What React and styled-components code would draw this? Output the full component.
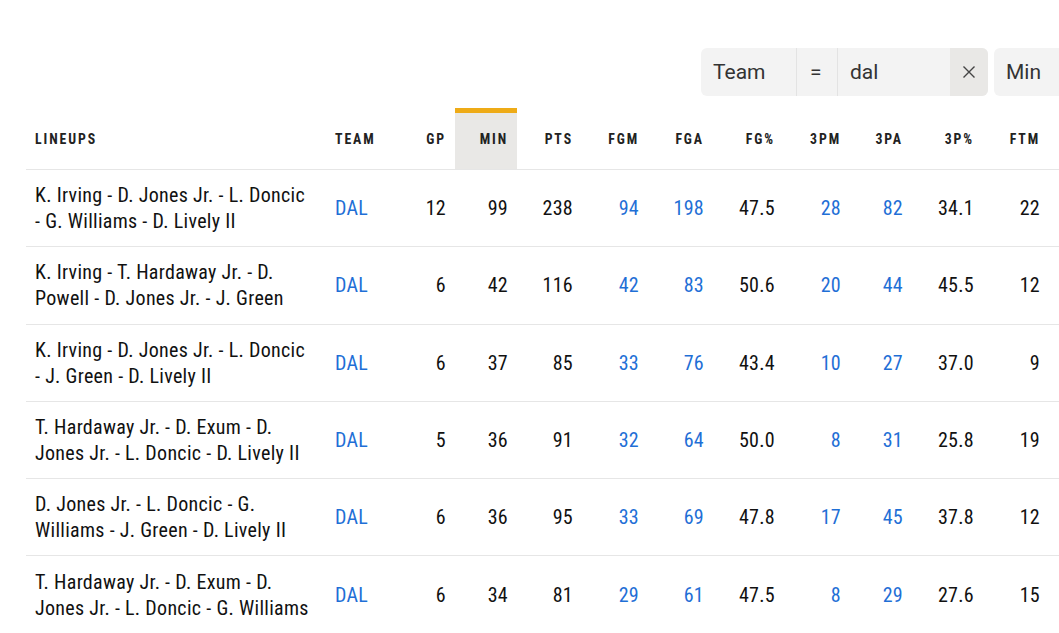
import React from "react";
import styled, { createGlobalStyle } from "styled-components";

const GlobalStyle = createGlobalStyle`
  html, body {
    margin: 0;
    padding: 0;
    overflow: hidden;
    background: #fff;
  }
  body {
    font-family: "Roboto Condensed", Roboto, "Liberation Sans", sans-serif;
    color: #111;
  }
`;

const Page = styled.div`
  width: 1255px;
  padding: 48px 0 0 26px;
`;

const FilterBar = styled.div`
  display: flex;
  justify-content: flex-end;
  gap: 6px;
  height: 48px;
  margin-bottom: 12px;
`;

const Filter = styled.div`
  display: flex;
  background: #f3f3f3;
  border-radius: 6px;
  overflow: hidden;
  font-family: Roboto, "Liberation Sans", sans-serif;
  font-size: 21px;
  color: #333;
`;

const FilterPart = styled.div`
  display: flex;
  align-items: center;
  width: ${(p) => p.$w}px;
  padding-left: ${(p) => p.$pl || 12}px;
  box-sizing: border-box;
  border-right: 1px solid ${(p) => (p.$last ? "transparent" : "#e3e3e3")};
`;

const ClearButton = styled.button`
  width: 38px;
  border: 0;
  background: #e9e8e6;
  color: #444;
  display: flex;
  align-items: center;
  justify-content: center;
  padding: 0;
  cursor: pointer;
`;

const Table = styled.table`
  border-collapse: collapse;
  table-layout: fixed;
  width: 1255px;
`;

const HeadCell = styled.th`
  height: 51px;
  padding: 0 9px 5px;
  font-size: 13.8px;
  font-weight: 700;
  letter-spacing: 1.9px;
  text-transform: uppercase;
  color: #222;
  text-align: ${(p) => p.$align || "right"};
  vertical-align: middle;
  border-top: 5px solid ${(p) => (p.$active ? "#eeab17" : "transparent")};
  background: ${(p) => (p.$active ? "#e9e8e6" : "transparent")};
  border-bottom: 1px solid #e6e6e6;
  white-space: nowrap;
`;

const Row = styled.tr`
  border-bottom: 1px solid #e6e6e6;
`;

const Cell = styled.td`
  height: 76.3px;
  padding: 0 9px;
  font-size: 20px;
  letter-spacing: 0.3px;
  line-height: 26px;
  text-align: ${(p) => p.$align || "right"};
  color: ${(p) => (p.$link ? "#1f6fd6" : "#111")};
  vertical-align: middle;
  white-space: ${(p) => (p.$wrap ? "normal" : "nowrap")};
`;

const LineupCell = styled(Cell)`
  padding-right: 12px;
`;

const columns = [
  { key: "lineup", label: "Lineups", w: 300, align: "left" },
  { key: "team", label: "Team", w: 67, align: "left", link: true },
  { key: "gp", label: "GP", w: 62 },
  { key: "min", label: "Min", w: 62, active: true },
  { key: "pts", label: "Pts", w: 65 },
  { key: "fgm", label: "FGM", w: 66, link: true },
  { key: "fga", label: "FGA", w: 65, link: true },
  { key: "fgp", label: "FG%", w: 71 },
  { key: "tpm", label: "3PM", w: 66, link: true },
  { key: "tpa", label: "3PA", w: 62, link: true },
  { key: "tpp", label: "3P%", w: 71 },
  { key: "ftm", label: "FTM", w: 66 },
  { key: "fta", label: "FTA", w: 66 },
  { key: "ftp", label: "FT%", w: 72 },
  { key: "oreb", label: "OREB", w: 74 },
  { key: "dreb", label: "DREB", w: 80 },
  { key: "reb", label: "REB", w: 80 },
];

const rows = [
  ["K. Irving - D. Jones Jr. - L. Doncic - G. Williams - D. Lively II", "DAL", 12, 99, 238, 94, 198, "47.5", 28, 82, "34.1", 22, 29, "75.9", 9, 33, 42],
  ["K. Irving - T. Hardaway Jr. - D. Powell - D. Jones Jr. - J. Green", "DAL", 6, 42, 116, 42, 83, "50.6", 20, 44, "45.5", 12, 15, "80.0", 5, 14, 19],
  ["K. Irving - D. Jones Jr. - L. Doncic - J. Green - D. Lively II", "DAL", 6, 37, 85, 33, 76, "43.4", 10, 27, "37.0", 9, 12, "75.0", 6, 15, 21],
  ["T. Hardaway Jr. - D. Exum - D. Jones Jr. - L. Doncic - D. Lively II", "DAL", 5, 36, 91, 32, 64, "50.0", 8, 31, "25.8", 19, 22, "86.4", 4, 13, 17],
  ["D. Jones Jr. - L. Doncic - G. Williams - J. Green - D. Lively II", "DAL", 6, 36, 95, 33, 69, "47.8", 17, 45, "37.8", 12, 16, "75.0", 7, 12, 19],
  ["T. Hardaway Jr. - D. Exum - D. Jones Jr. - L. Doncic - G. Williams", "DAL", 6, 34, 81, 29, 61, "47.5", 8, 29, "27.6", 15, 18, "83.3", 3, 11, 14],
];

function CloseIcon() {
  return (
    <svg width="14" height="14" viewBox="0 0 14 14" fill="none" stroke="#444" strokeWidth="1.4">
      <path d="M1.5 1.5 L12.5 12.5 M12.5 1.5 L1.5 12.5" />
    </svg>
  );
}

function FilterChip({ field, op, value }) {
  return (
    <Filter>
      <FilterPart $w={96}>{field}</FilterPart>
      <FilterPart $w={41} $pl={13}>{op}</FilterPart>
      <FilterPart $w={112} $last>{value}</FilterPart>
      <ClearButton aria-label="Clear filter">
        <CloseIcon />
      </ClearButton>
    </Filter>
  );
}

export default function App() {
  return (
    <Page>
      <GlobalStyle />
      <FilterBar>
        <FilterChip field="Team" op="=" value="dal" />
        <FilterChip field="Min" op="≥" value="30" />
      </FilterBar>
      <Table>
        <colgroup>
          {columns.map((c) => (
            <col key={c.key} style={{ width: c.w }} />
          ))}
        </colgroup>
        <thead>
          <tr>
            {columns.map((c) => (
              <HeadCell key={c.key} $align={c.align} $active={c.active}>
                {c.label}
              </HeadCell>
            ))}
          </tr>
        </thead>
        <tbody>
          {rows.map((r, i) => (
            <Row key={i}>
              {r.map((v, j) =>
                j === 0 ? (
                  <LineupCell key={j} $align="left" $wrap>
                    {v}
                  </LineupCell>
                ) : (
                  <Cell key={j} $align={columns[j].align} $link={columns[j].link}>
                    {v}
                  </Cell>
                )
              )}
            </Row>
          ))}
        </tbody>
      </Table>
    </Page>
  );
}
